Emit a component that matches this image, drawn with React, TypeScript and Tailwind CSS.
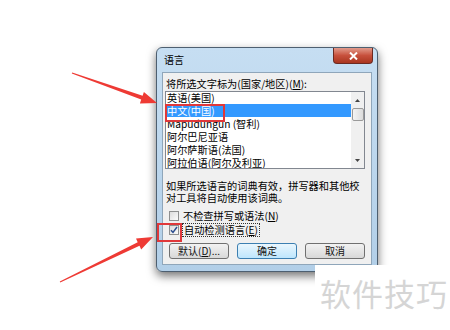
import React from "react";

const items = [
  "英语(美国)",
  "中文(中国)",
  "Mapudungun (智利)",
  "阿尔巴尼亚语",
  "阿尔萨斯语(法国)",
  "阿拉伯语(阿尔及利亚)",
];

const font = { fontFamily: '"Noto Sans CJK SC", "Liberation Sans", sans-serif' };

function CheckBox({ checked }: { checked?: boolean }) {
  return (
    <span className="w-[10px] h-[10px] border border-[#8e8f8f] bg-gradient-to-br from-[#dcdcdc] to-[#fbfbfb] flex items-center justify-center">
      {checked && (
        <svg width="8" height="8" viewBox="0 0 8 8">
          <path d="M1 4.2 L3 6.4 L7 1" stroke="#2a4c8f" strokeWidth="1.5" fill="none" />
        </svg>
      )}
    </span>
  );
}

function Btn({ label, primary, w }: { label: React.ReactNode; primary?: boolean; w: string }) {
  return (
    <div
      className={`${w} h-[16px] rounded-[3px] border flex items-center justify-center text-[10px] leading-none text-[#111] bg-gradient-to-b ${
        primary ? "border-[#3c7fb1] from-[#eaf6fd] to-[#bee6fd]" : "border-[#707070] from-[#f2f2f2] to-[#d8d8d8]"
      }`}
    >
      {label}
    </div>
  );
}

export default function App() {
  return (
    <div className="relative w-[450px] h-[330px] bg-white overflow-hidden text-black" style={font}>
      <div className="pt-[47px] pl-[156px]">
        <div className="w-[222px] h-[225px] rounded-[6px] border border-[#4d5f70] bg-gradient-to-b from-[#c6def2] to-[#b2cfe8] shadow-[0_4px_10px_rgba(0,0,0,0.55)] flex flex-col px-[5px] pb-[6px]">
          <div className="h-[24px] flex items-start justify-between">
            <span className="pt-[6px] pl-[2px] text-[10px] leading-[12px]">语言</span>
            <div className="-mr-[1px] w-[40px] h-[16px] rounded-b-[4px] border border-t-0 border-[#6b2a22] bg-gradient-to-b from-[#e19a8c] via-[#c7503c] to-[#a9361f] flex items-center justify-center">
              <svg width="9" height="8" viewBox="0 0 9 8">
                <path d="M1 0.5 L8 7.5 M8 0.5 L1 7.5" stroke="#fff" strokeWidth="2" />
              </svg>
            </div>
          </div>
          <div className="flex-1 bg-[#f0f0f0] border border-[#8fa6ba] px-[2px] pt-[4px] text-[10.2px]">
            <div className="pl-[1px] leading-[13px] h-[13px]">
              将所选文字标为(国家/地区)(<span className="underline">M</span>):
            </div>
            <div className="mt-[1px] w-[200px] h-[78px] border border-[#828790] bg-white flex overflow-hidden">
              <div className="flex-1 overflow-hidden">
                <div className="-mt-[1px]">
                  {items.map((t, i) => (
                    <div
                      key={t}
                      className={`h-[13px] leading-[13px] pl-[1px] whitespace-nowrap ${
                        i === 1 ? "bg-[#3399ff] text-white" : ""
                      }`}
                    >
                      {t}
                    </div>
                  ))}
                </div>
              </div>
              <div className="w-[13px] bg-[#f0f0f0] flex flex-col items-center">
                <div className="h-[16px] flex items-center justify-center">
                  <svg width="5" height="3" viewBox="0 0 5 3">
                    <path d="M0 3 L2.5 0 L5 3 Z" fill="#444" />
                  </svg>
                </div>
                <div className="w-[12px] h-[13px] rounded-[2px] border border-[#9a9a9a] bg-gradient-to-r from-[#f4f4f4] to-[#dcdcdc]" />
                <div className="flex-1" />
                <div className="h-[16px] flex items-center justify-center">
                  <svg width="5" height="3" viewBox="0 0 5 3">
                    <path d="M0 0 L2.5 3 L5 0 Z" fill="#444" />
                  </svg>
                </div>
              </div>
            </div>
            <div className="mt-[11px] pl-[1px] leading-[12px] whitespace-nowrap">
              <div>如果所选语言的词典有效，拼写器和其他校</div>
              <div>对工具将自动使用该词典。</div>
            </div>
            <div className="mt-[5px] pl-[4px] flex flex-col gap-[1px]">
              <div className="h-[13px] flex items-center gap-[4px]">
                <CheckBox />
                <span className="leading-[13px]">
                  不检查拼写或语法(<span className="underline">N</span>)
                </span>
              </div>
              <div className="h-[13px] flex items-center gap-[3px]">
                <CheckBox checked />
                <span className="leading-[12px] border border-dotted border-[#333] px-[1px]">
                  自动检测语言(<span className="underline">E</span>)
                </span>
              </div>
            </div>
            <div className="mt-[7px] pl-[4px] flex gap-[8px]">
              <Btn w="w-[60px]" label={<span>默认(<span className="underline">D</span>)...</span>} />
              <Btn w="w-[60px]" label="确定" primary />
              <Btn w="w-[60px]" label="取消" />
            </div>
          </div>
        </div>
      </div>

      {/* red highlight boxes */}
      <div className="absolute left-[165px] top-[104px] w-[60px] h-[18px] border-2 border-[#e0383a]" />
      <div className="absolute left-[157px] top-[223px] w-[25px] h-[19px] border-2 border-[#e0383a]" />

      {/* arrows */}
      <svg className="absolute left-0 top-0" width="450" height="330" viewBox="0 0 450 330">
        <polygon
          points="72.2,72.5 142.6,95.8 143.9,92.0 157,103 139.9,103.4 141.2,99.6 71.8,73.5"
          fill="#ee3a34"
        />
        <polygon
          points="59.8,281.5 137.7,242.2 136.0,238.6 153,237 141.2,249.4 139.5,245.8 60.2,282.5"
          fill="#ee3a34"
        />
      </svg>

      {/* watermark */}
      <div className="absolute left-[315px] top-[265px] w-[135px] h-[65px] bg-white pl-[5px] pt-[11px]">
        <span className="text-[31px] leading-[34px] tracking-[1px] text-[#d5d5d5]">软件技巧</span>
      </div>
    </div>
  );
}
